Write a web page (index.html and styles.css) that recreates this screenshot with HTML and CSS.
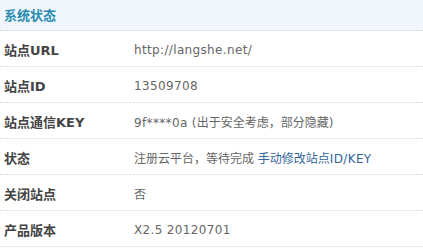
FILE: index.html
```html
<!DOCTYPE html>
<html>
<head>
<meta charset="utf-8">
<link rel="stylesheet" href="styles.css">
</head>
<body>
<table class="tb">
  <tr class="hd"><th colspan="2">系统状态</th></tr>
  <tr><td class="lb">站点URL</td><td class="vl"><span class="en">http://langshe.net/</span></td></tr>
  <tr><td class="lb">站点ID</td><td class="vl"><span class="en">13509708</span></td></tr>
  <tr><td class="lb">站点通信KEY</td><td class="vl"><span class="en">9f****0a (</span>出于安全考虑，部分隐藏<span class="en">)</span></td></tr>
  <tr><td class="lb">状态</td><td class="vl">注册云平台，等待完成 <a class="lk" href="#">手动修改站点<span class="en">ID/KEY</span></a></td></tr>
  <tr><td class="lb">关闭站点</td><td class="vl">否</td></tr>
  <tr><td class="lb">产品版本</td><td class="vl"><span class="en">X2.5 20120701</span></td></tr>
</table>
</body>
</html>
```
FILE: styles.css
```css
html, body { margin: 0; padding: 0; background: #fff; }
body { font-family: "DejaVu Sans", "Noto Sans CJK SC", sans-serif; font-size: 12px; color: #444; }
.tb { width: 423px; border-collapse: collapse; }
.tb td, .tb th { border-bottom: 1px dotted #d6d6d6; padding: 0 0 0 4px; text-align: left; vertical-align: middle; }
.hd th { height: 28px; padding-bottom: 2px; background: #f0f6fc; color: #2a8bb0; font-weight: bold; font-size: 13px; }
.tb td { height: 33px; padding-top: 2px; }
.lb { width: 126px; font-weight: bold; font-size: 13px; color: #444; }
.vl { color: #666; padding-left: 4px; }
.en { letter-spacing: 0.35px; }
.lk { color: #336699; text-decoration: none; }
.tb tr:last-child td { border-bottom: 1px solid #e3ebf2; }
```
